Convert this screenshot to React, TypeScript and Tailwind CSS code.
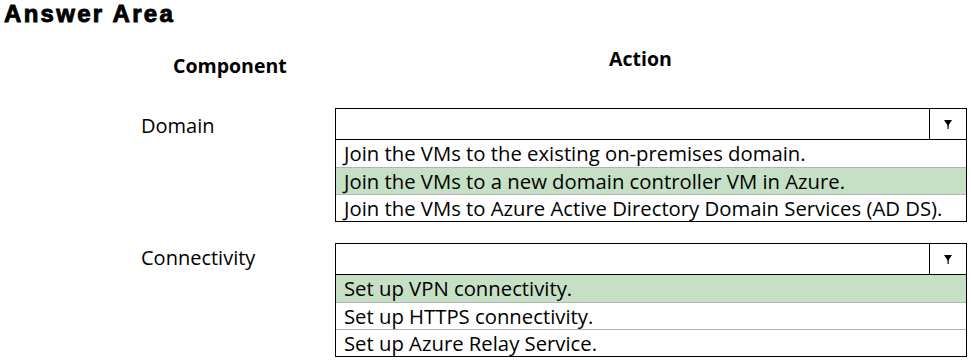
import React from 'react';

type Section = {
  label: string;
  options: string[];
  picked: number;
  labelTop: string;
};

const sections: Section[] = [
  {
    label: 'Domain',
    picked: 1,
    labelTop: 'pt-[3px]',
    options: [
      'Join the VMs to the existing on-premises domain.',
      'Join the VMs to a new domain controller VM in Azure.',
      'Join the VMs to Azure Active Directory Domain Services (AD DS).',
    ],
  },
  {
    label: 'Connectivity',
    picked: 0,
    labelTop: 'pt-0',
    options: [
      'Set up VPN connectivity.',
      'Set up HTTPS connectivity.',
      'Set up Azure Relay Service.',
    ],
  },
];

function Arrow() {
  return (
    <svg width="8" height="9" viewBox="0 0 8 9">
      <polygon points="0,0 8,0 4,6" fill="#000" />
      <rect x="3.5" y="4" width="1.2" height="5" fill="#000" />
    </svg>
  );
}

function Dropdown({ options, picked }: { options: string[]; picked: number }) {
  return (
    <div className="w-[632px] border border-black">
      <div className="flex h-[31px] border-b border-black">
        <div className="flex-1" />
        <div className="flex w-[37px] items-center justify-center border-l border-black">
          <Arrow />
        </div>
      </div>
      {options.map((opt, i) => (
        <div
          key={opt}
          className={`h-[27px] whitespace-nowrap pl-[8px] text-[20.3px] leading-[27px] ${i > 0 ? 'border-t border-[#b4b4b4]' : ''} ${i === picked ? 'bg-[#c5e0c4]' : 'bg-white'}`}
        >
          {opt}
        </div>
      ))}
    </div>
  );
}

export default function App() {
  return (
    <div className="h-[361px] w-[971px] bg-white text-black font-['Open_Sans',sans-serif]">
      <h1 className="pl-[4px] font-['Liberation_Sans',sans-serif] text-[24px] font-bold leading-[28px] tracking-[2.3px] [-webkit-text-stroke:0.9px_#000]">
        Answer Area
      </h1>

      <div className="flex h-[80px]">
        <div className="w-[335px] pl-[173px] pt-[23px]">
          <span className="text-[19.5px] font-bold">Component</span>
        </div>
        <div className="w-[632px] pl-[274px] pt-[16px]">
          <span className="text-[19.5px] font-bold">Action</span>
        </div>
      </div>

      {sections.map((s, idx) => (
        <div key={s.label} className={`flex ${idx === 0 ? 'mb-[21px]' : ''}`}>
          <div className={`w-[335px] pl-[141px] text-[20px] ${s.labelTop}`}>{s.label}</div>
          <Dropdown options={s.options} picked={s.picked} />
        </div>
      ))}
    </div>
  );
}
